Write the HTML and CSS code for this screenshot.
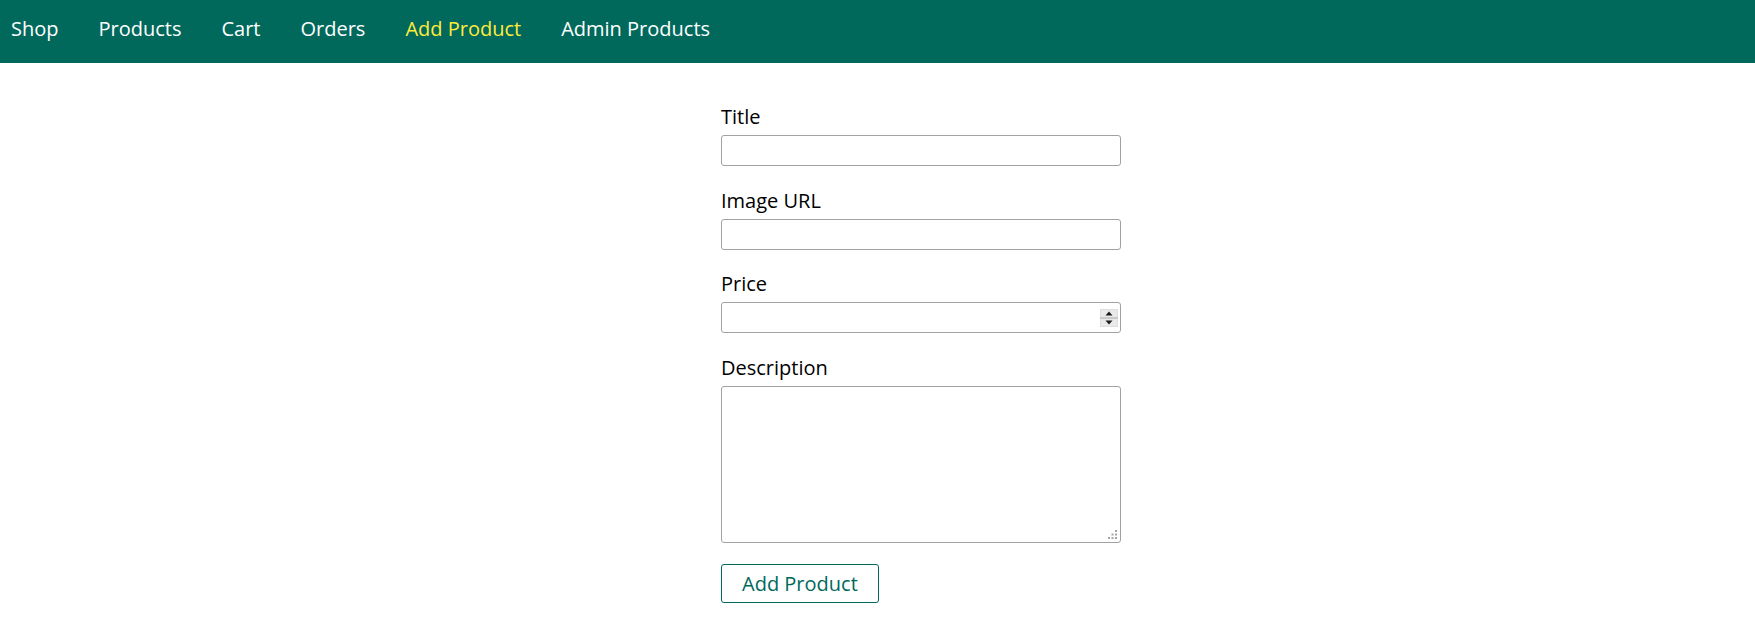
FILE: index.html
```html
<!DOCTYPE html>
<html lang="en">
<head>
<meta charset="utf-8">
<title>Add Product</title>
<link rel="stylesheet" href="styles.css">
</head>
<body>
<header class="main-header">
  <nav class="main-header__nav">
    <ul class="main-header__item-list">
      <li class="main-header__item"><a href="#">Shop</a></li>
      <li class="main-header__item"><a href="#">Products</a></li>
      <li class="main-header__item"><a href="#">Cart</a></li>
      <li class="main-header__item"><a href="#">Orders</a></li>
      <li class="main-header__item"><a class="active" href="#">Add Product</a></li>
      <li class="main-header__item"><a href="#">Admin Products</a></li>
    </ul>
  </nav>
</header>
<main class="main">
  <form class="product-form">
    <div class="form-control">
      <label for="title">Title</label>
      <input type="text" name="title" id="title">
    </div>
    <div class="form-control">
      <label for="imageUrl">Image URL</label>
      <input type="text" name="imageUrl" id="imageUrl">
    </div>
    <div class="form-control">
      <label for="price">Price</label>
      <div class="field">
        <input type="number" name="price" id="price" step="0.01">
        <span class="spinner" aria-hidden="true">
          <svg width="18" height="18" viewBox="0 0 18 18">
            <rect x="0" y="0" width="18" height="18" fill="#dedede"/>
            <rect x="1" y="1" width="16" height="7" fill="#e9e9e9"/>
            <rect x="1" y="10" width="16" height="7" fill="#e9e9e9"/>
            <rect x="0" y="8.5" width="18" height="1" fill="#b4b4b4"/>
            <polygon points="5.5,6.5 12.5,6.5 9,2.5" fill="#1a1a1a"/>
            <polygon points="5.5,11.5 12.5,11.5 9,15.5" fill="#1a1a1a"/>
          </svg>
        </span>
      </div>
    </div>
    <div class="form-control">
      <label for="description">Description</label>
      <div class="field">
        <textarea name="description" id="description"></textarea>
        <span class="resizer" aria-hidden="true">
          <svg width="9" height="9" viewBox="0 0 9 9">
            <rect x="7" y="0" width="2" height="2" fill="#a6a6a6"/>
            <rect x="3.5" y="3.5" width="2" height="2" fill="#a6a6a6"/>
            <rect x="7" y="3.5" width="2" height="2" fill="#a6a6a6"/>
            <rect x="0" y="7" width="2" height="2" fill="#a6a6a6"/>
            <rect x="3.5" y="7" width="2" height="2" fill="#a6a6a6"/>
            <rect x="7" y="7" width="2" height="2" fill="#a6a6a6"/>
          </svg>
        </span>
      </div>
    </div>
    <button class="btn" type="submit">Add Product</button>
  </form>
</main>
</body>
</html>
```
FILE: styles.css
```css
* { box-sizing: border-box; }

body {
  margin: 0;
  font-family: "Open Sans", "Liberation Sans", sans-serif;
  font-size: 20px;
  color: #000;
  background: #fff;
}

.main-header {
  height: 63px;
  background: #00695c;
  display: flex;
  align-items: center;
  padding: 0 0 6px 11px;
}

.main-header__item-list {
  list-style: none;
  margin: 0;
  padding: 0;
  display: flex;
  gap: 40px;
}

.main-header__item a {
  color: #fff;
  text-decoration: none;
  line-height: 27px;
}

.main-header__item a.active {
  color: #ffeb3b;
}

.main {
  padding: 40px 0 0 721px;
}

.product-form {
  width: 400px;
}

.form-control {
  margin-bottom: 20.5px;
}

.form-control label {
  display: block;
  line-height: 27px;
  margin-bottom: 5px;
}

.field {
  position: relative;
}

.form-control input,
.form-control textarea {
  display: block;
  width: 100%;
  border: 1px solid #a1a1a1;
  border-radius: 3px;
  font: inherit;
  margin: 0;
}

.form-control input {
  height: 31px;
  padding: 0 4px;
}

.form-control input[type="number"] {
  -moz-appearance: textfield;
  appearance: textfield;
}

.form-control input[type="number"]::-webkit-inner-spin-button,
.form-control input[type="number"]::-webkit-outer-spin-button {
  -webkit-appearance: none;
  margin: 0;
}

.spinner {
  position: absolute;
  right: 3px;
  top: 7px;
  width: 18px;
  height: 18px;
  pointer-events: none;
}

.spinner svg,
.resizer svg {
  display: block;
}

.form-control textarea {
  height: 157px;
  padding: 4px;
  resize: none;
}

.resizer {
  position: absolute;
  right: 4px;
  bottom: 4px;
  width: 9px;
  height: 9px;
  pointer-events: none;
}

.form-control:last-of-type {
  margin-bottom: 21.5px;
}

.btn {
  font: inherit;
  line-height: 27px;
  color: #00695c;
  background: #fff;
  border: 1px solid #00695c;
  border-radius: 3px;
  padding: 5px 20px;
  cursor: pointer;
}
```
